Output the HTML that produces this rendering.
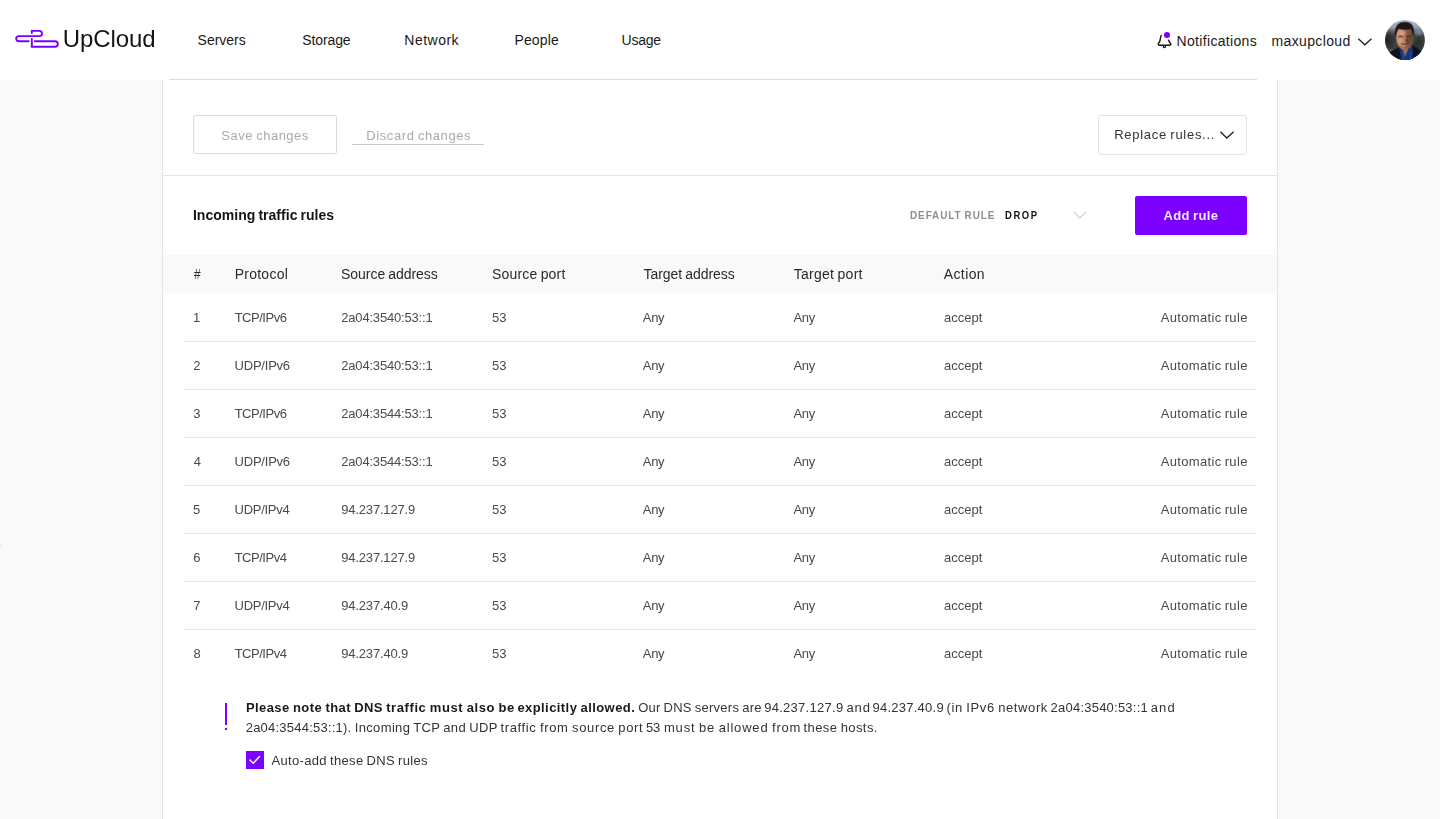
<!DOCTYPE html>
<html lang="en">
<head>
<meta charset="utf-8">
<title>UpCloud – Firewall</title>
<style>
*{box-sizing:border-box}
html,body{margin:0;padding:0}
body{width:1440px;height:819px;overflow:hidden;background:#f9f9f9;font-family:"Liberation Sans",sans-serif;position:relative}
.abs{position:absolute}
.t{position:absolute;white-space:pre;word-spacing:-0.8px;line-height:20px;font-family:"Liberation Sans",sans-serif}
#hdr{left:0;top:0;width:1440px;height:80px;background:#fff}
#panel{left:162px;top:80px;width:1116px;height:760px;background:#fff;border-left:1px solid #e4e4e4;border-right:1px solid #e4e4e4}
#topline{left:169px;top:79px;width:1088px;height:1px;background:#dcdcdc}
#save{left:193px;top:115px;width:144px;height:39px;border:1px solid #dcdcdc;border-radius:2px;background:#fff}
#discard{left:352px;top:144px;width:132px;height:1px;background:#cacaca}
#replace{left:1098px;top:115px;width:149px;height:40px;border:1px solid #e2e2e2;border-radius:3px;background:#fff}
#div1{left:163px;top:175px;width:1114px;height:1px;background:#e6e6e6}
#addrule{left:1135px;top:196px;width:112px;height:39px;background:#7b00ff;border-radius:2px}
#thead{left:163px;top:255px;width:1114px;height:38px;background:#f9f9f9}
.rl{position:absolute;left:183px;width:1074px;height:1px;background:#e6e6e6}
#bang{left:225px;top:703px;width:2px;height:22px;background:#7b00ff}
#bangdot{left:225px;top:728px;width:2px;height:2px;background:#7b00ff}
#cb{left:246px;top:751px;width:18px;height:18px;background:#7b00ff}
svg{position:absolute;overflow:visible}
#txt{position:absolute;left:0;top:0;width:1440px;height:819px;will-change:transform}
</style>
</head>
<body>
<div class="abs" id="hdr"></div>
<div class="abs" id="panel"></div>
<div class="abs" id="topline"></div>
<div class="abs" style="left:0;top:545px;width:1px;height:1px;background:#cfcfcf"></div>

<!-- logo -->
<svg style="left:0;top:0" width="70" height="80" viewBox="0 0 70 80">
  <path d="M31.8 33V30.9H39.4A2.6 2.6 0 0 1 39.4 36.1H18.8A2.6 2.6 0 0 0 18.8 41.3H28.7M31.8 39V46.7H55.1A2.7 2.7 0 0 0 55.1 41.3H34.9" fill="none" stroke="#7b00ff" stroke-width="1.9" stroke-linecap="round" stroke-linejoin="miter"/>
</svg>

<!-- bell -->
<svg style="left:1150px;top:20px" width="30" height="40" viewBox="1150 20 30 40">
  <path d="M1161.4 35.4C1160.3 36.6 1160.4 39.5 1159.8 41.2C1159.4 42.4 1158.2 43.2 1158.2 44.2C1158.2 45 1158.8 45.3 1159.6 45.3H1169.4C1170.2 45.3 1170.8 45 1170.8 44.2C1170.8 43 1169 42 1168.6 40.2" fill="none" stroke="#111" stroke-width="1.4" stroke-linecap="round" stroke-linejoin="round"/>
  <circle cx="1164.4" cy="46.6" r="1.1" fill="#fff" stroke="#111" stroke-width="1.2"/>
  <circle cx="1167" cy="35.05" r="3.05" fill="#7b00ff"/>
</svg>

<!-- user chevron -->
<svg style="left:1350px;top:30px" width="30" height="20" viewBox="1350 30 30 20">
  <path d="M1358.3 38.7L1364.8 44.8L1371.5 38.7" fill="none" stroke="#222" stroke-width="1.3" stroke-linecap="butt"/>
</svg>

<!-- avatar -->
<svg style="left:1385px;top:20px" width="40" height="40" viewBox="0 0 40 40">
  <defs>
    <clipPath id="avc"><circle cx="20" cy="20" r="19.9"/></clipPath>
    <linearGradient id="avbg" x1="0" y1="0" x2="0" y2="1">
      <stop offset="0" stop-color="#b3bcc7"/><stop offset=".18" stop-color="#98a2ad"/><stop offset=".3" stop-color="#5b6367"/><stop offset=".42" stop-color="#3c4244"/><stop offset=".75" stop-color="#393d3c"/><stop offset="1" stop-color="#14171f"/>
    </linearGradient>
    <linearGradient id="avface" x1="0" y1="0" x2="1" y2="0">
      <stop offset="0" stop-color="#c89270"/><stop offset=".42" stop-color="#bf8663"/><stop offset=".66" stop-color="#8c5a44"/><stop offset="1" stop-color="#643c2f"/>
    </linearGradient>
    <radialGradient id="avl" cx=".5" cy=".5" r=".5"><stop offset="0" stop-color="#1e2223"/><stop offset="1" stop-color="#1e2223" stop-opacity="0"/></radialGradient>
    <radialGradient id="avr" cx=".5" cy=".5" r=".5"><stop offset="0" stop-color="#838a8e"/><stop offset="1" stop-color="#838a8e" stop-opacity="0"/></radialGradient>
    <radialGradient id="avr2" cx=".5" cy=".5" r=".5"><stop offset="0" stop-color="#2a2e2f"/><stop offset="1" stop-color="#2a2e2f" stop-opacity="0"/></radialGradient>
    <radialGradient id="avg" cx=".5" cy=".5" r=".5"><stop offset="0" stop-color="#5f6638"/><stop offset="1" stop-color="#5f6638" stop-opacity="0"/></radialGradient>
    <radialGradient id="avhl" cx=".5" cy=".5" r=".5"><stop offset="0" stop-color="#dba988"/><stop offset="1" stop-color="#dba988" stop-opacity="0"/></radialGradient>
    <radialGradient id="avsh" cx=".5" cy=".5" r=".5"><stop offset="0" stop-color="#4d2e25"/><stop offset="1" stop-color="#4d2e25" stop-opacity="0"/></radialGradient>
  </defs>
  <g clip-path="url(#avc)">
    <rect width="40" height="40" fill="url(#avbg)"/>
    <ellipse cx="2" cy="20" rx="9" ry="12" fill="url(#avl)"/>
    <ellipse cx="34" cy="12" rx="6" ry="4.5" fill="url(#avr)"/>
    <ellipse cx="33" cy="23" rx="7" ry="8" fill="url(#avr2)"/>
    <ellipse cx="6" cy="30.5" rx="6" ry="2.6" fill="url(#avg)"/>
    <path d="M0 40C2 33 8 30.5 14.5 27.5L27.5 25.5C32 28 37 30 40 40Z" fill="#0e1120" stroke="#0e1120" stroke-opacity=".45" stroke-width="1.4"/>
    <path d="M14.3 28L17 27L27.3 25.5L27.8 40H16.5Z" fill="#1b357a" stroke="#1b357a" stroke-opacity=".45" stroke-width="1"/>
    <path d="M17.5 31L19 36L17.8 40" stroke="#3357b4" stroke-opacity=".7" stroke-width="1.2" fill="none"/>
    <path d="M25 31L25.5 36L24.5 40" stroke="#2c4da6" stroke-opacity=".7" stroke-width="1" fill="none"/>
    <path d="M17 26L23.6 26L22.3 31L20.3 35.8L18.3 31Z" fill="#9a6a52" stroke="#9a6a52" stroke-opacity=".45" stroke-width="1"/>
    <path d="M11.4 16C11 22 13 27 17.5 29.2C20 30 22.5 29.5 24.5 27.5C27 25 28 21 27.9 16C28 11 26 8 19.5 8C13 8 11.5 11 11.4 16Z" fill="url(#avface)" stroke="#a87458" stroke-opacity=".4" stroke-width="1.2"/>
    <ellipse cx="16.5" cy="13" rx="5" ry="3.4" fill="url(#avhl)"/>
    <ellipse cx="15.5" cy="21" rx="3.6" ry="4" fill="url(#avhl)" opacity=".8"/>
    <ellipse cx="22.3" cy="20.5" rx="2.6" ry="3.6" fill="url(#avsh)" opacity=".85"/>
    <path d="M13.4 16.7Q15.6 15.8 18 16.8" stroke="#4e3028" stroke-opacity=".75" stroke-width="1.3" fill="none"/>
    <path d="M21.3 16.8Q23.5 15.8 26 16.7" stroke="#3d241e" stroke-opacity=".75" stroke-width="1.3" fill="none"/>
    <path d="M16 23.4Q19.8 25.4 23.8 23.2" stroke="#5a352b" stroke-opacity=".7" stroke-width="1.2" fill="none"/>
    <path d="M14.5 26.2Q19.5 30 25.5 25.7" stroke="#8e604b" stroke-opacity=".6" stroke-width="1.6" fill="none"/>
    <path d="M10.3 16.8C9.2 9 12 2 19.5 2.2C27.5 2 29.8 8 28.4 16.2C27.6 12.5 27.2 10.2 25.5 8.8C22 9.8 16 9.4 13.4 8.6C11.6 10.6 11 13.5 10.3 16.8Z" fill="#1c1716" stroke="#1c1716" stroke-opacity=".45" stroke-width="1.2"/>
  </g>
</svg>

<span class="t" style="left:197.56px;top:30px;font-size:14px;color:#1a1a1a;letter-spacing:-0.005px;">Servers</span>
<span class="t" style="left:302.31px;top:30px;font-size:14px;color:#1a1a1a;letter-spacing:-0.126px;">Storage</span>
<span class="t" style="left:404.36px;top:30px;font-size:14px;color:#1a1a1a;letter-spacing:0.476px;">Network</span>
<span class="t" style="left:514.40px;top:30px;font-size:14px;color:#1a1a1a;letter-spacing:0.155px;">People</span>
<span class="t" style="left:621.50px;top:30px;font-size:14px;color:#1a1a1a;letter-spacing:-0.209px;">Usage</span>
<span class="t" style="left:1176.52px;top:31px;font-size:14px;color:#1a1a1a;letter-spacing:0.330px;">Notifications</span>
<span class="t" style="left:1271.44px;top:31px;font-size:14px;color:#1a1a1a;letter-spacing:0.370px;">maxupcloud</span>

<!-- toolbar -->
<div class="abs" id="save"></div>
<div class="abs" id="discard"></div>
<div class="abs" id="replace"></div>
<svg style="left:1215px;top:125px" width="25" height="20" viewBox="1215 125 25 20">
  <path d="M1220.4 131.8L1226.8 138L1233.6 131.8" fill="none" stroke="#222" stroke-width="1.3"/>
</svg>
<div class="abs" id="div1"></div>

<!-- section head -->
<svg style="left:1070px;top:205px" width="22" height="18" viewBox="1070 205 22 18">
  <path d="M1073.5 211.6L1079.7 217.9L1086.5 211.6" fill="none" stroke="#cfcfcf" stroke-width="1.2"/>
</svg>
<div class="abs" id="addrule"></div>

<!-- table -->
<div class="abs" id="thead"></div>
<div class="rl" style="top:341px"></div>
<div class="rl" style="top:389px"></div>
<div class="rl" style="top:437px"></div>
<div class="rl" style="top:485px"></div>
<div class="rl" style="top:533px"></div>
<div class="rl" style="top:581px"></div>
<div class="rl" style="top:629px"></div>

<!-- note -->
<div class="abs" id="bang"></div>
<div class="abs" id="bangdot"></div>
<div class="abs" id="cb"></div>
<svg style="left:246px;top:751px" width="18" height="18" viewBox="246 751 18 18">
  <path d="M249.5 759.6L253.3 763.2L259.8 756.3" fill="none" stroke="#fff" stroke-width="1.5"/>
</svg>

<div id="txt">
<span class="t" style="left:62.63px;top:29px;font-size:24px;color:#151515;letter-spacing:-0.050px;">UpCloud</span>
<span class="t" style="left:221.32px;top:126px;font-size:13px;color:#aaa;letter-spacing:0.492px;">Save changes</span>
<span class="t" style="left:366.30px;top:126px;font-size:13px;color:#aaa;letter-spacing:0.590px;">Discard changes</span>
<span class="t" style="left:1114.16px;top:125px;font-size:13px;color:#333;letter-spacing:0.713px;">Replace rules...</span>
<span class="t" style="left:192.96px;top:205px;font-size:14px;color:#151515;letter-spacing:0.017px;font-weight:700;">Incoming traffic rules</span>
<span class="t" style="left:910.14px;top:205px;font-size:11px;color:#8e8e8e;letter-spacing:1.058px;font-weight:700;transform:scaleX(0.9);transform-origin:0 0;">DEFAULT RULE</span>
<span class="t" style="left:1005.22px;top:205px;font-size:11px;color:#111;letter-spacing:1.853px;font-weight:700;transform:scaleX(0.86);transform-origin:0 0;">DROP</span>
<span class="t" style="left:1163.62px;top:206px;font-size:13px;color:#f4e9ff;letter-spacing:0.340px;font-weight:700;">Add rule</span>
<span class="t" style="left:193.89px;top:264px;font-size:14px;color:#2a2a2a;transform:scaleX(0.85);transform-origin:0 0;">#</span>
<span class="t" style="left:234.67px;top:264px;font-size:14px;color:#2a2a2a;letter-spacing:0.256px;">Protocol</span>
<span class="t" style="left:341.04px;top:264px;font-size:14px;color:#2a2a2a;letter-spacing:-0.042px;">Source address</span>
<span class="t" style="left:492.04px;top:264px;font-size:14px;color:#2a2a2a;letter-spacing:0.169px;">Source port</span>
<span class="t" style="left:643.53px;top:264px;font-size:14px;color:#2a2a2a;letter-spacing:-0.041px;">Target address</span>
<span class="t" style="left:793.77px;top:264px;font-size:14px;color:#2a2a2a;letter-spacing:0.258px;">Target port</span>
<span class="t" style="left:943.65px;top:264px;font-size:14px;color:#2a2a2a;letter-spacing:0.420px;">Action</span>
<span class="t" style="left:192.98px;top:308px;font-size:13px;color:#4a4a4a;">1</span>
<span class="t" style="left:234.67px;top:308px;font-size:13px;color:#4a4a4a;letter-spacing:-0.482px;">TCP/IPv6</span>
<span class="t" style="left:341.24px;top:308px;font-size:13px;color:#4a4a4a;letter-spacing:-0.182px;">2a04:3540:53::1</span>
<span class="t" style="left:492.10px;top:308px;font-size:13px;color:#4a4a4a;letter-spacing:-0.140px;">53</span>
<span class="t" style="left:642.85px;top:308px;font-size:13px;color:#4a4a4a;letter-spacing:-0.313px;">Any</span>
<span class="t" style="left:793.46px;top:308px;font-size:13px;color:#4a4a4a;letter-spacing:-0.342px;">Any</span>
<span class="t" style="left:943.92px;top:308px;font-size:13px;color:#4a4a4a;letter-spacing:0.045px;">accept</span>
<span class="t" style="left:1160.65px;top:308px;font-size:13px;color:#4a4a4a;letter-spacing:0.344px;">Automatic rule</span>
<span class="t" style="left:193.24px;top:356px;font-size:13px;color:#4a4a4a;">2</span>
<span class="t" style="left:234.59px;top:356px;font-size:13px;color:#4a4a4a;letter-spacing:-0.224px;">UDP/IPv6</span>
<span class="t" style="left:341.24px;top:356px;font-size:13px;color:#4a4a4a;letter-spacing:-0.182px;">2a04:3540:53::1</span>
<span class="t" style="left:492.10px;top:356px;font-size:13px;color:#4a4a4a;letter-spacing:-0.140px;">53</span>
<span class="t" style="left:642.85px;top:356px;font-size:13px;color:#4a4a4a;letter-spacing:-0.313px;">Any</span>
<span class="t" style="left:793.46px;top:356px;font-size:13px;color:#4a4a4a;letter-spacing:-0.342px;">Any</span>
<span class="t" style="left:943.92px;top:356px;font-size:13px;color:#4a4a4a;letter-spacing:0.045px;">accept</span>
<span class="t" style="left:1160.65px;top:356px;font-size:13px;color:#4a4a4a;letter-spacing:0.344px;">Automatic rule</span>
<span class="t" style="left:193.13px;top:404px;font-size:13px;color:#4a4a4a;">3</span>
<span class="t" style="left:234.67px;top:404px;font-size:13px;color:#4a4a4a;letter-spacing:-0.482px;">TCP/IPv6</span>
<span class="t" style="left:341.24px;top:404px;font-size:13px;color:#4a4a4a;letter-spacing:-0.182px;">2a04:3544:53::1</span>
<span class="t" style="left:492.10px;top:404px;font-size:13px;color:#4a4a4a;letter-spacing:-0.140px;">53</span>
<span class="t" style="left:642.85px;top:404px;font-size:13px;color:#4a4a4a;letter-spacing:-0.313px;">Any</span>
<span class="t" style="left:793.46px;top:404px;font-size:13px;color:#4a4a4a;letter-spacing:-0.342px;">Any</span>
<span class="t" style="left:943.92px;top:404px;font-size:13px;color:#4a4a4a;letter-spacing:0.045px;">accept</span>
<span class="t" style="left:1160.65px;top:404px;font-size:13px;color:#4a4a4a;letter-spacing:0.344px;">Automatic rule</span>
<span class="t" style="left:193.67px;top:452px;font-size:13px;color:#4a4a4a;">4</span>
<span class="t" style="left:234.59px;top:452px;font-size:13px;color:#4a4a4a;letter-spacing:-0.224px;">UDP/IPv6</span>
<span class="t" style="left:341.24px;top:452px;font-size:13px;color:#4a4a4a;letter-spacing:-0.182px;">2a04:3544:53::1</span>
<span class="t" style="left:492.10px;top:452px;font-size:13px;color:#4a4a4a;letter-spacing:-0.140px;">53</span>
<span class="t" style="left:642.85px;top:452px;font-size:13px;color:#4a4a4a;letter-spacing:-0.313px;">Any</span>
<span class="t" style="left:793.46px;top:452px;font-size:13px;color:#4a4a4a;letter-spacing:-0.342px;">Any</span>
<span class="t" style="left:943.92px;top:452px;font-size:13px;color:#4a4a4a;letter-spacing:0.045px;">accept</span>
<span class="t" style="left:1160.65px;top:452px;font-size:13px;color:#4a4a4a;letter-spacing:0.344px;">Automatic rule</span>
<span class="t" style="left:193.10px;top:500px;font-size:13px;color:#4a4a4a;">5</span>
<span class="t" style="left:234.59px;top:500px;font-size:13px;color:#4a4a4a;letter-spacing:-0.281px;">UDP/IPv4</span>
<span class="t" style="left:341.23px;top:500px;font-size:13px;color:#4a4a4a;letter-spacing:-0.174px;">94.237.127.9</span>
<span class="t" style="left:492.10px;top:500px;font-size:13px;color:#4a4a4a;letter-spacing:-0.140px;">53</span>
<span class="t" style="left:642.85px;top:500px;font-size:13px;color:#4a4a4a;letter-spacing:-0.313px;">Any</span>
<span class="t" style="left:793.46px;top:500px;font-size:13px;color:#4a4a4a;letter-spacing:-0.342px;">Any</span>
<span class="t" style="left:943.92px;top:500px;font-size:13px;color:#4a4a4a;letter-spacing:0.045px;">accept</span>
<span class="t" style="left:1160.65px;top:500px;font-size:13px;color:#4a4a4a;letter-spacing:0.344px;">Automatic rule</span>
<span class="t" style="left:193.22px;top:548px;font-size:13px;color:#4a4a4a;">6</span>
<span class="t" style="left:234.67px;top:548px;font-size:13px;color:#4a4a4a;letter-spacing:-0.485px;">TCP/IPv4</span>
<span class="t" style="left:341.23px;top:548px;font-size:13px;color:#4a4a4a;letter-spacing:-0.174px;">94.237.127.9</span>
<span class="t" style="left:492.10px;top:548px;font-size:13px;color:#4a4a4a;letter-spacing:-0.140px;">53</span>
<span class="t" style="left:642.85px;top:548px;font-size:13px;color:#4a4a4a;letter-spacing:-0.313px;">Any</span>
<span class="t" style="left:793.46px;top:548px;font-size:13px;color:#4a4a4a;letter-spacing:-0.342px;">Any</span>
<span class="t" style="left:943.92px;top:548px;font-size:13px;color:#4a4a4a;letter-spacing:0.045px;">accept</span>
<span class="t" style="left:1160.65px;top:548px;font-size:13px;color:#4a4a4a;letter-spacing:0.344px;">Automatic rule</span>
<span class="t" style="left:193.24px;top:596px;font-size:13px;color:#4a4a4a;">7</span>
<span class="t" style="left:234.59px;top:596px;font-size:13px;color:#4a4a4a;letter-spacing:-0.281px;">UDP/IPv4</span>
<span class="t" style="left:341.23px;top:596px;font-size:13px;color:#4a4a4a;letter-spacing:-0.171px;">94.237.40.9</span>
<span class="t" style="left:492.10px;top:596px;font-size:13px;color:#4a4a4a;letter-spacing:-0.140px;">53</span>
<span class="t" style="left:642.85px;top:596px;font-size:13px;color:#4a4a4a;letter-spacing:-0.313px;">Any</span>
<span class="t" style="left:793.46px;top:596px;font-size:13px;color:#4a4a4a;letter-spacing:-0.342px;">Any</span>
<span class="t" style="left:943.92px;top:596px;font-size:13px;color:#4a4a4a;letter-spacing:0.045px;">accept</span>
<span class="t" style="left:1160.65px;top:596px;font-size:13px;color:#4a4a4a;letter-spacing:0.344px;">Automatic rule</span>
<span class="t" style="left:193.41px;top:644px;font-size:13px;color:#4a4a4a;">8</span>
<span class="t" style="left:234.67px;top:644px;font-size:13px;color:#4a4a4a;letter-spacing:-0.485px;">TCP/IPv4</span>
<span class="t" style="left:341.23px;top:644px;font-size:13px;color:#4a4a4a;letter-spacing:-0.171px;">94.237.40.9</span>
<span class="t" style="left:492.10px;top:644px;font-size:13px;color:#4a4a4a;letter-spacing:-0.140px;">53</span>
<span class="t" style="left:642.85px;top:644px;font-size:13px;color:#4a4a4a;letter-spacing:-0.313px;">Any</span>
<span class="t" style="left:793.46px;top:644px;font-size:13px;color:#4a4a4a;letter-spacing:-0.342px;">Any</span>
<span class="t" style="left:943.92px;top:644px;font-size:13px;color:#4a4a4a;letter-spacing:0.045px;">accept</span>
<span class="t" style="left:1160.65px;top:644px;font-size:13px;color:#4a4a4a;letter-spacing:0.344px;">Automatic rule</span>
<span class="t" style="left:245.88px;top:698px;font-size:13px;color:#1a1a1a;letter-spacing:0.437px;font-weight:700;">Please note that DNS</span>
<span class="t" style="left:386.15px;top:698px;font-size:13px;color:#1a1a1a;letter-spacing:0.596px;font-weight:700;">traffic must also be</span>
<span class="t" style="left:517.39px;top:698px;font-size:13px;color:#1a1a1a;letter-spacing:0.427px;font-weight:700;">explicitly allowed.</span>
<span class="t" style="left:638.16px;top:698px;font-size:13px;color:#333;letter-spacing:0.240px;">Our DNS servers are</span>
<span class="t" style="left:764.23px;top:698px;font-size:13px;color:#333;letter-spacing:0.274px;">94.237.127.9</span>
<span class="t" style="left:846.47px;top:698px;font-size:13px;color:#333;letter-spacing:0.890px;">and</span>
<span class="t" style="left:872.54px;top:698px;font-size:13px;color:#333;letter-spacing:0.241px;">94.237.40.9</span>
<span class="t" style="left:946.55px;top:698px;font-size:13px;color:#333;letter-spacing:0.614px;">(in IPv6 network</span>
<span class="t" style="left:1050.61px;top:698px;font-size:13px;color:#333;letter-spacing:0.224px;">2a04:3540:53::1</span>
<span class="t" style="left:1150.65px;top:698px;font-size:13px;color:#333;letter-spacing:1.142px;">and</span>
<span class="t" style="left:245.73px;top:718px;font-size:13px;color:#333;letter-spacing:0.223px;">2a04:3544:53::1).</span>
<span class="t" style="left:354.69px;top:718px;font-size:13px;color:#333;letter-spacing:0.358px;">Incoming TCP and UDP</span>
<span class="t" style="left:500.46px;top:718px;font-size:13px;color:#333;letter-spacing:0.645px;">traffic from source port</span>
<span class="t" style="left:645.98px;top:718px;font-size:13px;color:#333;letter-spacing:-0.133px;">53</span>
<span class="t" style="left:663.99px;top:718px;font-size:13px;color:#333;letter-spacing:0.806px;">must be allowed from</span>
<span class="t" style="left:803.46px;top:718px;font-size:13px;color:#333;letter-spacing:0.427px;">these hosts.</span>
<span class="t" style="left:271.59px;top:751px;font-size:13px;color:#333;letter-spacing:0.320px;">Auto-add these DNS rules</span>
</div>
</body>
</html>
